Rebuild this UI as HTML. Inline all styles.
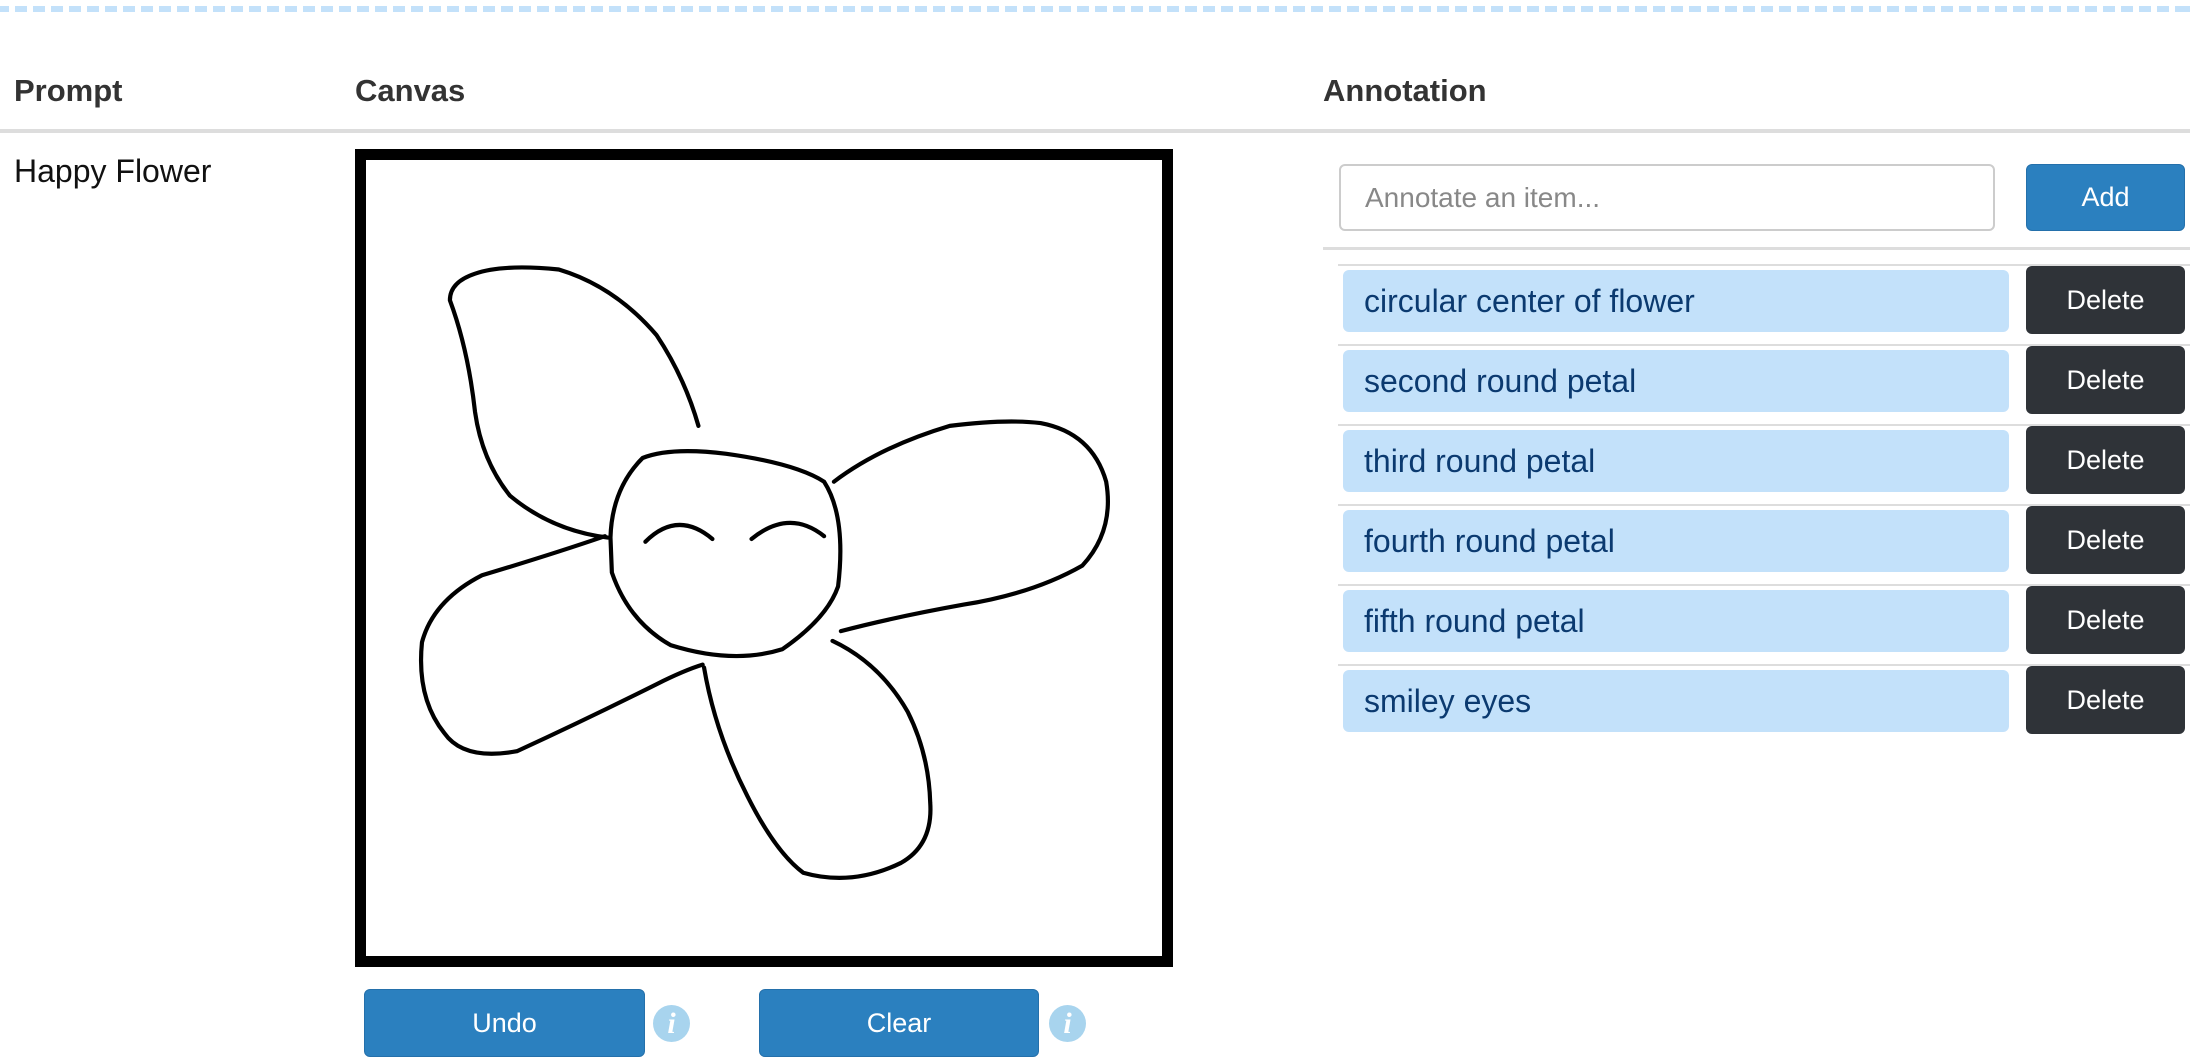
<!DOCTYPE html>
<html><head><meta charset="utf-8"><style>
*{margin:0;padding:0;box-sizing:border-box}
body{width:2190px;height:1064px;position:relative;overflow:hidden;background:#fff;font-family:"Liberation Sans",Arial,sans-serif;}
.a{position:absolute}
.dash{left:0;top:6px;width:2190px;height:6px;background:repeating-linear-gradient(90deg,#c3e1fa 0 12px,transparent 12px 18px);background-position:-3px 0}
.h{font-weight:bold;font-size:31px;color:#333;top:73px}
.rule{background:#ddd}
.btn{border-radius:6px;color:#fff;font-size:27px;display:flex;align-items:center;justify-content:center}
.blue{background:#2b80bf;border:1px solid #2470ab}
.dark{background:#2f3338}
.pill{background:#c3e1fa;border-radius:6px;color:#0b3a70;font-size:32px;display:flex;align-items:center;padding-left:21px}
.info{width:37px;height:37px;border-radius:50%;background:#a8d4ee;color:#fff;font-family:"Liberation Serif",serif;font-style:italic;font-weight:bold;font-size:30px;display:flex;align-items:center;justify-content:center}
</style></head><body>
<div class="a dash"></div>
<div class="a h" style="left:14px">Prompt</div>
<div class="a h" style="left:355px">Canvas</div>
<div class="a h" style="left:1323px">Annotation</div>
<div class="a rule" style="left:0;top:129px;width:2190px;height:4px"></div>
<div class="a" style="left:14px;top:153px;font-size:32px;color:#111">Happy Flower</div>
<div class="a" style="left:355px;top:149px;width:818px;height:818px;border:11px solid #000"></div>
<svg class="a" style="left:0;top:0" width="2190" height="1064" viewBox="0 0 1568 762" fill="none" stroke="#000" stroke-width="3" stroke-linejoin="round" stroke-linecap="round">
<path id="p0" d="M437,385 Q438,350 460,328 Q480,320 520,325 Q570,332 590,345 Q606,370 600,420 Q592,443 560,465 Q525,476 480,462 Q450,445 438,410 Z"/>
<path d="M462,388 Q485,365 510,386"/>
<path d="M538,386 Q565,364 590,384"/>
<path d="M435,385 Q395,380 365,355 Q345,330 340,295 Q335,250 322,215 Q322,202 340,196 Q360,189 400,193 Q440,205 470,240 Q490,270 500,305"/>
<path d="M597,345 Q630,320 680,305 Q720,300 745,303 Q782,310 792,345 Q798,380 775,405 Q740,425 690,433 Q640,442 602,452"/>
<path d="M433,384 Q395,397 345,412 Q310,430 302,460 Q298,500 318,525 Q332,545 370,538 Q420,515 470,490 Q490,480 503,476"/>
<path d="M504,478 Q512,525 535,570 Q555,610 575,625 Q610,635 645,618 Q668,605 666,575 Q665,540 650,510 Q630,475 596,459"/>
</svg>
<div class="a btn blue" style="left:364px;top:989px;width:281px;height:68px">Undo</div>
<div class="a info" style="left:653px;top:1005px">i</div>
<div class="a btn blue" style="left:759px;top:989px;width:280px;height:68px">Clear</div>
<div class="a info" style="left:1049px;top:1005px">i</div>
<div class="a" style="left:1339px;top:164px;width:656px;height:67px;border:2px solid #ccc;border-radius:6px;font-size:28px;color:#888;padding-left:24px;display:flex;align-items:center">Annotate an item...</div>
<div class="a btn blue" style="left:2026px;top:164px;width:159px;height:67px">Add</div>
<div class="a rule" style="left:1323px;top:247px;width:867px;height:3px"></div>
<div class="a rule" style="left:1338px;top:264px;width:852px;height:2px"></div>
<div class="a pill" style="left:1343px;top:270px;width:666px;height:62px">circular center of flower</div>
<div class="a btn dark" style="left:2026px;top:266px;width:159px;height:68px">Delete</div>
<div class="a rule" style="left:1338px;top:344px;width:852px;height:2px"></div>
<div class="a pill" style="left:1343px;top:350px;width:666px;height:62px">second round petal</div>
<div class="a btn dark" style="left:2026px;top:346px;width:159px;height:68px">Delete</div>
<div class="a rule" style="left:1338px;top:424px;width:852px;height:2px"></div>
<div class="a pill" style="left:1343px;top:430px;width:666px;height:62px">third round petal</div>
<div class="a btn dark" style="left:2026px;top:426px;width:159px;height:68px">Delete</div>
<div class="a rule" style="left:1338px;top:504px;width:852px;height:2px"></div>
<div class="a pill" style="left:1343px;top:510px;width:666px;height:62px">fourth round petal</div>
<div class="a btn dark" style="left:2026px;top:506px;width:159px;height:68px">Delete</div>
<div class="a rule" style="left:1338px;top:584px;width:852px;height:2px"></div>
<div class="a pill" style="left:1343px;top:590px;width:666px;height:62px">fifth round petal</div>
<div class="a btn dark" style="left:2026px;top:586px;width:159px;height:68px">Delete</div>
<div class="a rule" style="left:1338px;top:664px;width:852px;height:2px"></div>
<div class="a pill" style="left:1343px;top:670px;width:666px;height:62px">smiley eyes</div>
<div class="a btn dark" style="left:2026px;top:666px;width:159px;height:68px">Delete</div>
</body></html>
